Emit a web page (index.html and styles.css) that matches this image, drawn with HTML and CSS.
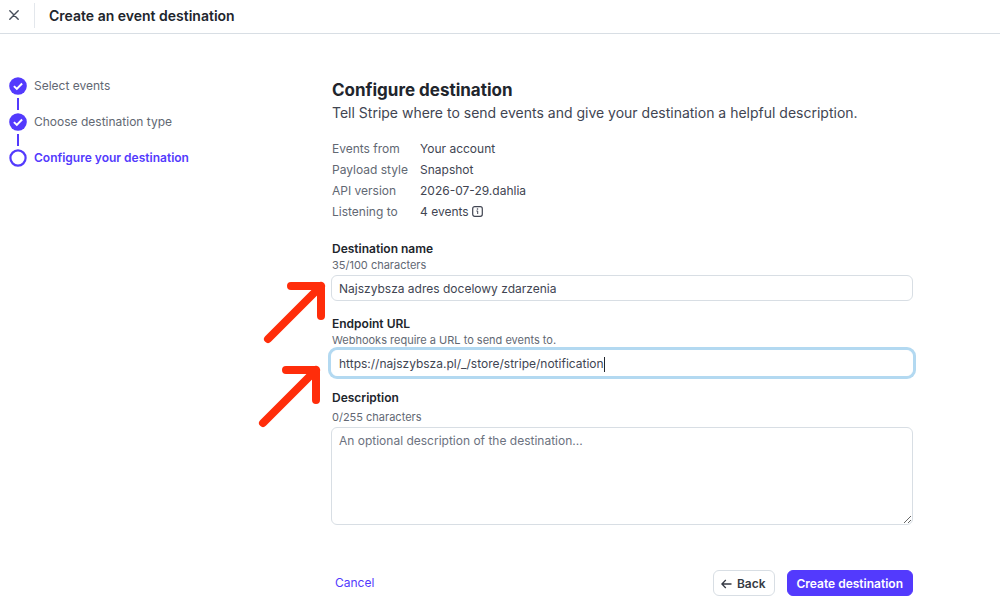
FILE: index.html
```html
<!DOCTYPE html>
<html lang="en">
<head>
<meta charset="utf-8">
<meta name="viewport" content="width=device-width, initial-scale=1">
<title>Create an event destination</title>
<link rel="stylesheet" href="styles.css">
</head>
<body>
<header class="topbar">
  <button class="close" type="button" aria-label="Close">
    <svg width="10" height="10" viewBox="0 0 10 10"><path d="M.8 .8l8.4 8.4M9.2 .8l-8.4 8.4" fill="none" stroke="currentColor" stroke-width="1.4" stroke-linecap="round"/></svg>
  </button>
  <h1 class="topbar-title">Create an event destination</h1>
</header>
<main class="layout">
  <nav aria-label="Progress">
    <ol class="steps">
      <li class="step">
        <svg class="step-icon" viewBox="0 0 18 18"><circle cx="9" cy="9" r="8.8" fill="currentColor"/><path d="M4.9 9.1l2.9 2.8 5.3-5.4" fill="none" stroke="#fff" stroke-width="2"/></svg>
        <span class="step-label">Select events</span>
      </li>
      <li class="step">
        <svg class="step-icon" viewBox="0 0 18 18"><circle cx="9" cy="9" r="8.8" fill="currentColor"/><path d="M4.9 9.1l2.9 2.8 5.3-5.4" fill="none" stroke="#fff" stroke-width="2"/></svg>
        <span class="step-label">Choose destination type</span>
      </li>
      <li class="step step-current" aria-current="step">
        <svg class="step-icon" viewBox="0 0 18 18"><circle cx="9" cy="9" r="7.6" fill="#fff" stroke="currentColor" stroke-width="2.2"/></svg>
        <span class="step-label">Configure your destination</span>
      </li>
    </ol>
  </nav>
  <form class="form">
    <h2 class="form-title">Configure destination</h2>
    <p class="form-intro">Tell Stripe where to send events and give your destination a helpful description.</p>
    <dl class="summary">
      <dt>Events from</dt><dd>Your account</dd>
      <dt>Payload style</dt><dd>Snapshot</dd>
      <dt>API version</dt><dd>2026-07-29.dahlia</dd>
      <dt>Listening to</dt><dd>4 events <svg class="info" viewBox="0 0 11 11"><rect x=".7" y=".7" width="9.6" height="9.6" rx="2" fill="none" stroke="currentColor" stroke-width="1.2"/><path d="M4.4 5h1.3v3" fill="none" stroke="currentColor"/><circle cx="5.5" cy="3" r=".8" fill="currentColor"/></svg></dd>
    </dl>
    <div class="field">
      <label class="label" for="name">Destination name</label>
      <p class="hint" id="name-hint">35/100 characters</p>
      <input class="control" id="name" type="text" value="Najszybsza adres docelowy zdarzenia" aria-describedby="name-hint">
      <svg class="arrow arrow-name" viewBox="0 0 64 64"><path d="M5 59L58 6M28 6H58V36" /></svg>
    </div>
    <div class="field">
      <label class="label" for="url">Endpoint URL</label>
      <p class="hint" id="url-hint">Webhooks require a URL to send events to.</p>
      <div class="control control-active">
        <input class="control-input" id="url" type="text" value="https://najszybsza.pl/_/store/stripe/notification" aria-describedby="url-hint">
        <span class="caret"></span>
      </div>
      <svg class="arrow arrow-url" viewBox="0 0 64 64"><path d="M5 59L58 6M28 6H58V36" /></svg>
    </div>
    <div class="field">
      <label class="label" for="description">Description</label>
      <p class="hint hint-spaced" id="description-hint">0/255 characters</p>
      <textarea class="control control-area" id="description" placeholder="An optional description of the destination..." aria-describedby="description-hint"></textarea>
    </div>
    <div class="actions">
      <a class="cancel" href="#">Cancel</a>
      <button class="button" type="button">
        <svg width="11" height="10" viewBox="0 0 11 10"><path d="M10.5 5H1M4.8 1L.9 5l3.9 4" fill="none" stroke="currentColor" stroke-width="1.3"/></svg>
        Back
      </button>
      <button class="button button-primary" type="submit">Create destination</button>
    </div>
  </form>
</main>
</body>
</html>
```
FILE: styles.css
```css
* {
  box-sizing: border-box;
}

body {
  margin: 0;
  background: #fff;
  color: #414552;
  font-family: Inter, "Liberation Sans", sans-serif;
  font-size: 12px;
  line-height: 18px;
}

h1, h2, p, dl, dd, ol {
  margin: 0;
  padding: 0;
}

input, textarea, button {
  font: inherit;
}

.topbar {
  display: flex;
  align-items: center;
  padding: 3px 8px 5px;
  border-bottom: 1px solid #d8dee4;
}

.close {
  display: flex;
  padding: 7px 15px 8px 1px;
  border: 0;
  border-right: 1px solid #e3e7ec;
  background: none;
  color: #474e5a;
}

.topbar-title {
  margin-left: 14px;
  color: #21252c;
  font-size: 14px;
  font-weight: 600;
}

.layout {
  display: grid;
  grid-template-columns: 323px minmax(0, 1fr);
  padding: 43px 87px 6px 8px;
}

.steps {
  display: grid;
  gap: 18px;
  list-style: none;
  color: #533afd;
}

.step {
  display: flex;
  position: relative;
  gap: 7px;
  padding-left: 1px;
}

.step-icon {
  width: 18px;
  height: 18px;
}

.step + .step::before {
  content: "";
  position: absolute;
  top: -15px;
  left: 9px;
  width: 2px;
  height: 12px;
  background: #533afd;
}

.step-label {
  color: #626873;
}

.step-current .step-label {
  color: #533afd;
  font-weight: 600;
}

.form-title {
  padding-left: 1px;
  color: #21252c;
  font-size: 17px;
  font-weight: 700;
  line-height: 26px;
}

.form-intro {
  padding-left: 1px;
  font-size: 14px;
  line-height: 20px;
}

.summary {
  display: grid;
  grid-template-columns: 76px 1fr;
  gap: 3px 12px;
  margin: 17px 0 19px;
  padding-left: 1px;
}

.summary dt {
  color: #626873;
  white-space: nowrap;
}

.info {
  width: 11px;
  height: 11px;
  vertical-align: -1px;
}

.field {
  display: flex;
  position: relative;
  flex-direction: column;
  margin-bottom: 14px;
}

.label {
  padding-left: 1px;
  color: #21252c;
  font-weight: 600;
}

.hint {
  padding: 0 0 3px 1px;
  color: #626873;
  font-size: 11px;
  line-height: 14px;
}

.hint-spaced {
  padding: 3px 0 3px 1px;
}

.control {
  width: 100%;
  padding: 4px 7px 2px;
  border: 1px solid #d8dee4;
  border-radius: 6px;
  outline: 0;
  background: #fff;
  color: #414552;
}

.control::placeholder {
  color: #6c7280;
}

.control-active {
  display: flex;
  align-items: center;
  margin-bottom: -1px;
  border-color: #fff;
  box-shadow: 0 0 0 3px #b3d9f1;
}

.control-input {
  field-sizing: content;
  max-width: 100%;
  padding: 0;
  border: 0;
  outline: 0;
  background: none;
  color: inherit;
}

.caret {
  width: 1px;
  height: 15px;
  background: #21252c;
}

.control-area {
  height: 98px;
  resize: vertical;
}

.arrow {
  position: absolute;
  width: 64px;
  height: 64px;
  fill: none;
  stroke: #ff2d0a;
  stroke-width: 8;
  stroke-linecap: round;
  stroke-linejoin: round;
}

.arrow-name {
  top: 40px;
  left: -68px;
}

.arrow-url {
  top: 49px;
  left: -73px;
}

.actions {
  display: flex;
  align-items: center;
  gap: 12px;
  padding-top: 31px;
}

.cancel {
  margin-right: auto;
  padding-left: 4px;
  color: #533afd;
  text-decoration: none;
}

.button {
  display: flex;
  align-items: center;
  gap: 5px;
  padding: 4px 8px 2px 7px;
  border: 1px solid #d8dee4;
  border-radius: 6px;
  background: #fff;
  color: #353a44;
  font-weight: 600;
}

.button-primary {
  padding: 4px 9px 2px;
  border-color: #533afd;
  background: #533afd;
  color: #fff;
}
```
